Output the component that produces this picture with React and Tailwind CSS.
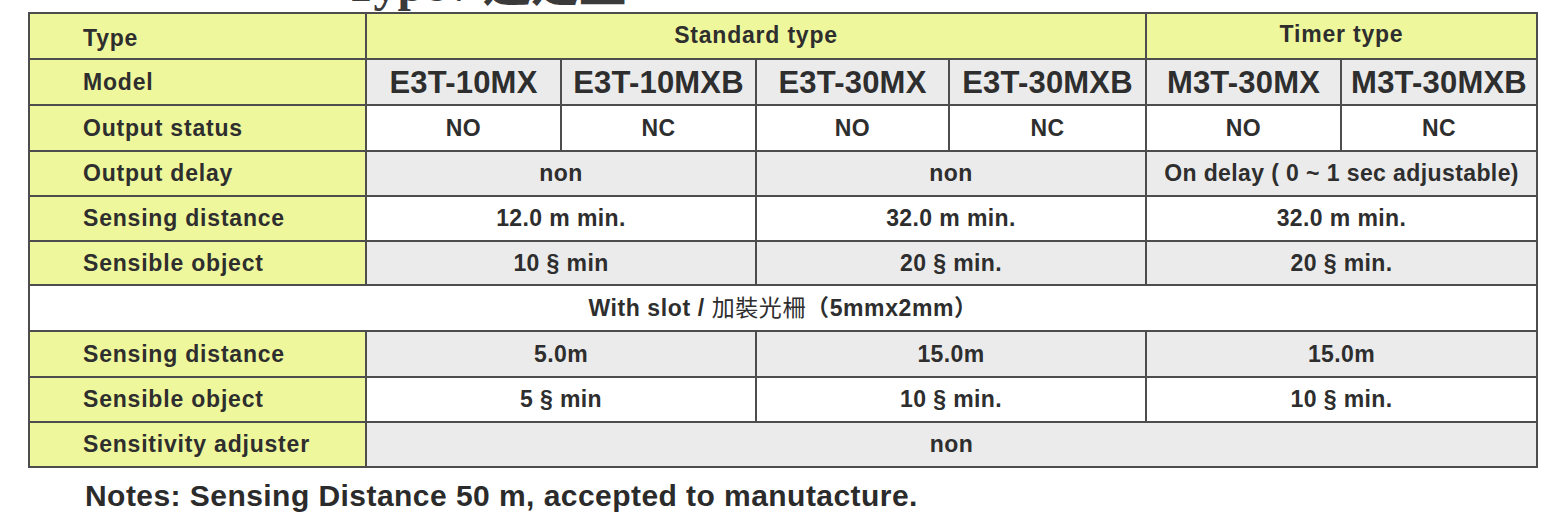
const font = { fontFamily: '"Liberation Sans", "Noto Sans CJK TC", Arial, sans-serif' };

const YELLOW = "bg-[#eef79b]";
const GRAY = "bg-[#ebebeb]";
const WHITE = "bg-white";

const rows = [
  {
    label: "Model",
    bg: GRAY,
    big: true,
    cells: [
      ["E3T-10MX", 1],
      ["E3T-10MXB", 1],
      ["E3T-30MX", 1],
      ["E3T-30MXB", 1],
      ["M3T-30MX", 1],
      ["M3T-30MXB", 1],
    ],
    h: "h-[46px]",
  },
  {
    label: "Output status",
    bg: WHITE,
    cells: [
      ["NO", 1],
      ["NC", 1],
      ["NO", 1],
      ["NC", 1],
      ["NO", 1],
      ["NC", 1],
    ],
    h: "h-[46px]",
  },
  {
    label: "Output delay",
    bg: GRAY,
    cells: [
      ["non", 2],
      ["non", 2],
      ["On delay ( 0 ~ 1 sec adjustable)", 2],
    ],
    h: "h-[45px]",
  },
  {
    label: "Sensing distance",
    bg: WHITE,
    cells: [
      ["12.0 m min.", 2],
      ["32.0 m min.", 2],
      ["32.0 m min.", 2],
    ],
    h: "h-[45px]",
  },
  {
    label: "Sensible object",
    bg: GRAY,
    cells: [
      ["10 § min", 2],
      ["20 § min.", 2],
      ["20 § min.", 2],
    ],
    h: "h-[44px]",
  },
];

const slotRows = [
  {
    label: "Sensing distance",
    bg: GRAY,
    cells: [
      ["5.0m", 2],
      ["15.0m", 2],
      ["15.0m", 2],
    ],
    h: "h-[46px]",
  },
  {
    label: "Sensible object",
    bg: WHITE,
    cells: [
      ["5 § min", 2],
      ["10 § min.", 2],
      ["10 § min.", 2],
    ],
    h: "h-[45px]",
  },
  {
    label: "Sensitivity adjuster",
    bg: GRAY,
    cells: [["non", 6]],
    h: "h-[45px]",
  },
];

function Label({ children }) {
  return (
    <td
      className={`${YELLOW} border-2 border-[#4d4d4d] pl-[53px] p-0 text-left text-[23px] leading-none font-bold tracking-[0.8px] text-[#2e2e2e]`}
    >
      {children}
    </td>
  );
}

function DataRow({ row }) {
  return (
    <tr className={row.h}>
      <Label>{row.label}</Label>
      {row.cells.map(([text, span], i) => (
        <td
          key={i}
          colSpan={span}
          className={`${row.bg} border-2 border-[#4d4d4d] p-0 text-center leading-none font-bold text-[#2e2e2e] whitespace-nowrap ${
            row.big ? "text-[31px] tracking-[0.2px]" : "text-[23px] tracking-[0.4px]"
          }`}
        >
          {text}
        </td>
      ))}
    </tr>
  );
}

export default function App() {
  return (
    <div className="w-[1562px] h-[532px] bg-white overflow-hidden" style={font}>
      <div className="h-[12px] overflow-hidden">
        <div
          className="-mt-[40px] pl-[345px] text-[48px] leading-[50px] font-bold text-[#3a3a3a] whitespace-nowrap"
          style={{ fontFamily: '"Liberation Serif", "Noto Sans CJK TC", serif' }}
        >
          Type / 選定型
        </div>
      </div>
      <div className="pl-[28px]">
        <table className="border-collapse border-2 border-[#4d4d4d] table-fixed w-[1508px]">
          <colgroup>
            <col className="w-[337px]" />
            <col className="w-[195px]" />
            <col className="w-[195px]" />
            <col className="w-[193px]" />
            <col className="w-[197px]" />
            <col className="w-[195px]" />
            <col className="w-[196px]" />
          </colgroup>
          <tbody>
            <tr className="h-[46px]">
              <td
                className={`${YELLOW} border-2 border-[#4d4d4d] pl-[53px] pt-[4px] text-left text-[23px] leading-none font-bold tracking-[0.8px] text-[#2e2e2e]`}
              >
                Type
              </td>
              <td
                colSpan={4}
                className={`${YELLOW} border-2 border-[#4d4d4d] text-center text-[23px] leading-none font-bold tracking-[0.8px] text-[#2e2e2e] pb-[2px]`}
              >
                Standard type
              </td>
              <td
                colSpan={2}
                className={`${YELLOW} border-2 border-[#4d4d4d] text-center text-[23px] leading-none font-bold tracking-[0.8px] text-[#2e2e2e] pb-[4px]`}
              >
                Timer type
              </td>
            </tr>
            {rows.map((r, i) => (
              <DataRow key={i} row={r} />
            ))}
            <tr className="h-[46px]">
              <td
                colSpan={7}
                className="bg-white border-2 border-[#4d4d4d] text-center text-[23px] leading-none font-bold tracking-[0.6px] text-[#2e2e2e]"
              >
                With slot / <span className="font-normal">加裝光柵</span>（5mmx2mm）
              </td>
            </tr>
            {slotRows.map((r, i) => (
              <DataRow key={i} row={r} />
            ))}
          </tbody>
        </table>
      </div>
      <div className="pl-[85px] pt-[10px] text-[30px] leading-[36px] font-bold text-[#2b2b2b] tracking-[0.45px]">
        Notes: Sensing Distance 50 m, accepted to manutacture.
      </div>
    </div>
  );
}
